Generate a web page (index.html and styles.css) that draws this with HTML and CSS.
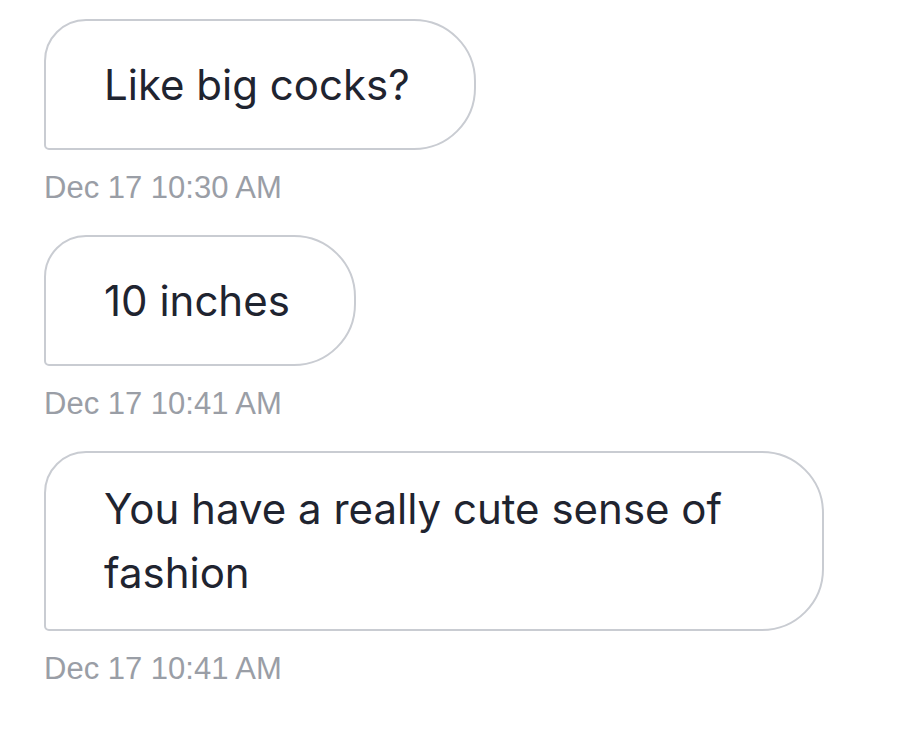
FILE: index.html
```html
<!DOCTYPE html>
<html>
<head>
<meta charset="utf-8">
<link rel="stylesheet" href="styles.css">
</head>
<body>
<div class="thread">
  <div class="msg">
    <div class="bubble">Like big cocks?</div>
    <div class="time">Dec 17 10:30 AM</div>
  </div>
  <div class="msg">
    <div class="bubble">10 inches</div>
    <div class="time">Dec 17 10:41 AM</div>
  </div>
  <div class="msg">
    <div class="bubble bubble-multi">You have a really cute sense of fashion</div>
    <div class="time">Dec 17 10:41 AM</div>
  </div>
</div>
</body>
</html>
```
FILE: styles.css
```css
html, body {
  margin: 0;
  padding: 0;
  background: #ffffff;
}
.thread {
  display: flex;
  flex-direction: column;
  align-items: flex-start;
  padding: 19px 0 0 44px;
}
.msg {
  display: flex;
  flex-direction: column;
  align-items: flex-start;
  margin-bottom: 29px;
}
.bubble {
  box-sizing: border-box;
  border: 2px solid #c9ccd2;
  border-radius: 42px 62px 62px 5px;
  padding: 33px 64px 32px 58px;
  font-family: Inter, "Noto Sans", sans-serif;
  font-size: 42px;
  line-height: 62px;
  color: #1f2430;
  max-width: 780px;
}
.bubble-multi {
  width: 780px;
  padding: 24px 58px 24px 58px;
  line-height: 64px;
}
.time {
  margin-top: 20px;
  font-family: "Liberation Sans", Arial, sans-serif;
  font-size: 31px;
  line-height: 36px;
  color: #9a9ea6;
}
```
